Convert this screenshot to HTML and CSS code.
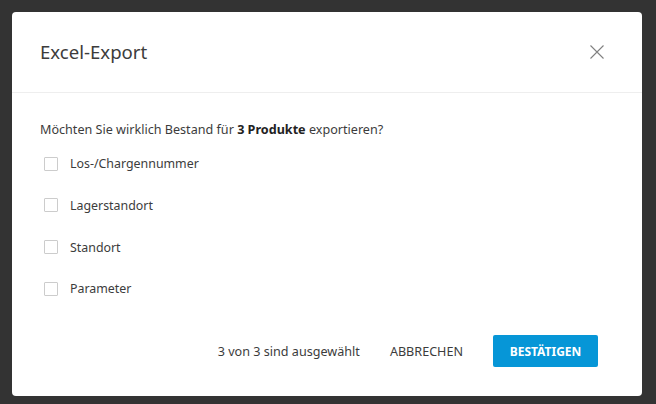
FILE: index.html
```html
<!DOCTYPE html>
<html lang="de">
<head>
<meta charset="utf-8">
<title>Excel-Export</title>
<link rel="stylesheet" href="styles.css">
</head>
<body>
<div class="dialog">
  <div class="header">
    <h1 class="title">Excel-Export</h1>
    <button class="close" aria-label="Schließen">
      <svg width="14" height="14" viewBox="0 0 14 14"><path d="M0.5 0.5L13.5 13.5M13.5 0.5L0.5 13.5" stroke="#808080" stroke-width="1.1" fill="none"/></svg>
    </button>
  </div>
  <div class="body">
    <p class="question">Möchten Sie wirklich Bestand für <b>3 Produkte</b> exportieren?</p>
    <ul class="options">
      <li class="option"><span class="box"></span><span class="label">Los-/Chargennummer</span></li>
      <li class="option"><span class="box"></span><span class="label">Lagerstandort</span></li>
      <li class="option"><span class="box"></span><span class="label">Standort</span></li>
      <li class="option"><span class="box"></span><span class="label">Parameter</span></li>
    </ul>
  </div>
  <div class="footer">
    <span class="count">3 von 3 sind ausgewählt</span>
    <button class="btn-text">ABBRECHEN</button>
    <button class="btn-primary">BESTÄTIGEN</button>
  </div>
</div>
</body>
</html>
```
FILE: styles.css
```css
* { box-sizing: border-box; }
html, body { margin: 0; padding: 0; }
body {
  background: #333333;
  padding: 12px;
  font-family: "Noto Sans", "Open Sans", sans-serif;
  color: #3c3c3c;
}
.dialog {
  width: 630px;
  height: 384px;
  background: #ffffff;
  border-radius: 4px;
  display: flex;
  flex-direction: column;
}
.header {
  height: 81px;
  border-bottom: 1px solid #eeeeee;
  display: flex;
  align-items: center;
  justify-content: space-between;
  padding: 0 38px 0 28px;
}
.title {
  margin: 0;
  font-size: 18.6px;
  font-weight: 400;
  color: #3c3c3c;
  line-height: 28px;
}
.close {
  border: 0;
  background: none;
  padding: 0;
  width: 14px;
  height: 14px;
  display: flex;
}
.body {
  padding: 27px 28px 0 28px;
}
.question {
  margin: 0 0 3px 0;
  font-size: 12.6px;
  line-height: 20px;
}
.question b { font-weight: 700; color: #222; }
.options {
  list-style: none;
  margin: 0;
  padding: 0 0 0 4px;
}
.option {
  height: 41.67px;
  display: flex;
  align-items: center;
  font-size: 12.4px;
}
.box {
  width: 14px;
  height: 14px;
  border: 1px solid #cccccc;
  border-radius: 1px;
  margin-right: 12px;
}
.footer {
  margin-top: auto;
  display: flex;
  justify-content: flex-end;
  align-items: center;
  padding: 0 44px 29px 28px;
  font-size: 12.6px;
}
.count { margin-right: 30px; }
.btn-text {
  border: 0;
  background: none;
  padding: 0;
  font-family: inherit;
  font-size: 12.6px;
  color: #3c3c3c;
  margin-right: 30px;
}
.btn-primary {
  border: 0;
  border-radius: 2px;
  background: #0696d7;
  color: #ffffff;
  font-family: inherit;
  font-size: 12px;
  font-weight: 700;
  width: 105px;
  height: 32px;
  padding: 0;
}
```
